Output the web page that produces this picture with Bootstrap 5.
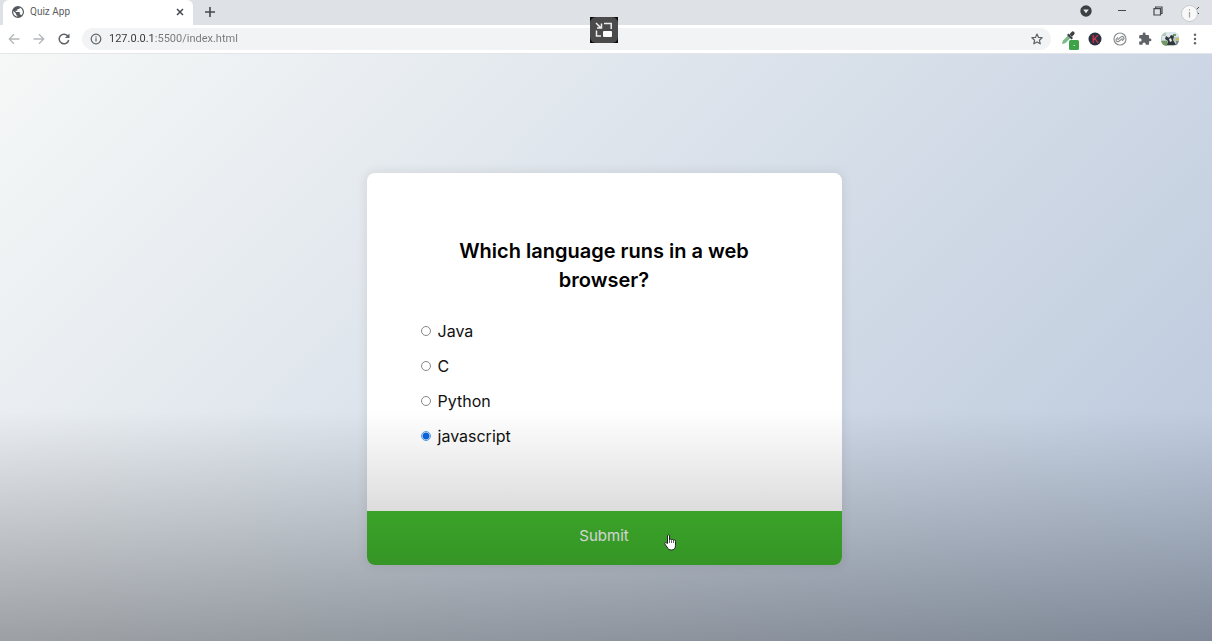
<!DOCTYPE html>
<html lang="en">
<head>
<meta charset="utf-8">
<meta name="viewport" content="width=device-width, initial-scale=1">
<title>Quiz App</title>
<link rel="stylesheet" href="https://cdn.jsdelivr.net/npm/bootstrap@5.3.0/dist/css/bootstrap.min.css">
<style>
  body { font-family: Roboto, "Noto Sans", sans-serif; color: #3c4043; }
  svg { display: block; }
  .plain { border: 0; background: none; padding: 0; color: inherit; display: flex; align-items: center; justify-content: center; }

  /* browser window */
  .title-strip { background: #dee1e6; height: 25px; }
  .page-tab { background: #fff; width: 190px; margin-left: 3px; padding: 0 7px 2px 9px; border-radius: 6px 6px 0 0; font-size: 10px; color: #5a5d61; }
  .tab-name { margin: 0 auto 0 6px; }
  .new-tab { width: 34px; height: 23px; color: #45484c; }
  .win-btn { width: 36px; height: 21px; color: #45484c; }
  .tool-strip { background: #fff; height: 29px; padding: 0 5px 0 1px; border-bottom: 1px solid #e3e5e8; }
  .tool-btn { width: 25px; height: 25px; color: #5f6368; }
  .tool-btn:disabled { color: #b4b7ba; }
  .address { background: #f1f3f4; height: 22px; margin: 0 6px; padding: 0 8px; border-radius: 11px; color: #5f6368; }
  .address input {
    border: 0; outline: 0; padding: 0; min-width: 0; margin: 0 8px 0 7px; font-size: 11px; line-height: 20px;
    color: transparent; background: linear-gradient(90deg, #33363a 46px, #74787c 46px);
    -webkit-background-clip: text; background-clip: text;
  }
  .info-dot { top: 5px; right: 14px; z-index: 3; }
  .pip-btn { top: 17px; left: 590px; width: 28px; height: 26px; background: #0b0b0b; z-index: 3; }
  .pip-btn span { background: #4b4b4b; border-radius: 6px; }

  /* quiz page */
  .quiz-page { background: linear-gradient(135deg, #f6f8f7, #b8c6db); padding: 42px 4px 0 0; }
  .shade { height: 231px; background: linear-gradient(rgba(0,0,0,0), rgba(0,0,0,.31)); pointer-events: none; z-index: 2; }
  .quiz-box { max-width: 475px; border-radius: 8px; background: #fff; box-shadow: 0 0 8px 2px rgba(100,100,100,.12); font-family: Inter, sans-serif; color: #111; }
  .quiz-body { padding: 64px 54px 62px; }
  .quiz-body h2 { font-size: 20px; line-height: 29px; font-weight: 600; color: #000; margin: 0 0 24px; }
  .answers { gap: 10px; }
  .answers label { font-size: 16px; line-height: 25px; }
  .answers input { appearance: none; width: 10px; height: 10px; margin: 0 7px 0 0; border: 1px solid #85878a; border-radius: 50%; background: #fff; }
  .answers input:checked { border-color: #5a9fe6; background: radial-gradient(circle, #0a66e0 0 3px, #fff 4px); }
  .submit-btn { height: 54px; padding-bottom: 2px; font-size: 15px; color: #fff; background: #43bc2f; border-radius: 0 0 8px 8px; }
  .hand { left: 297px; top: 23px; z-index: 3; }
</style>
</head>
<body class="d-flex flex-column min-vh-100 position-relative overflow-hidden">

<header>
  <div class="title-strip d-flex">
    <div class="page-tab d-flex align-items-center">
      <svg width="12" height="12" viewBox="0 0 24 24" aria-hidden="true"><path fill="#55585c" d="M12 0a12 12 0 1 0 0 24 12 12 0 0 0 0-24zM10.800 21.500A9.600 9.600 0 0 1 2.700 9.900L8.400 15.600v1.200a2.400 2.400 0 0 0 2.400 2.400zm8.300-3a2.400 2.400 0 0 0-2.300-1.700h-1.200v-3.600a1.200 1.200 0 0 0-1.200-1.200H7.200V9.600h2.400a1.200 1.200 0 0 0 1.200-1.200V6h2.400a2.400 2.400 0 0 0 2.400-2.400v-.5a9.600 9.600 0 0 1 3.500 15.400z"/></svg>
      <span class="tab-name">Quiz App</span>
      <button type="button" class="plain" aria-label="Close tab"><svg width="12" height="12" viewBox="0 0 12 12" stroke="#45484c" stroke-width="1.500"><path d="M3 3l6 6M9 3l-6 6"/></svg></button>
    </div>
    <button type="button" class="plain new-tab" aria-label="New tab"><svg width="12" height="12" viewBox="0 0 12 12" stroke="currentColor" stroke-width="1.600"><path d="M6 1v10M1 6h10"/></svg></button>
    <div class="d-flex ms-auto">
      <button type="button" class="plain win-btn" aria-label="Search tabs"><svg width="12" height="12" viewBox="0 0 12 12"><circle cx="6" cy="6" r="5.700" fill="#3c4043"/><path fill="#e4e6e9" d="M3.200 4.500h5.600L6 8.200z"/></svg></button>
      <button type="button" class="plain win-btn" aria-label="Minimize"><svg width="10" height="10" viewBox="0 0 10 10" stroke="currentColor"><path d="M1 4.500h8"/></svg></button>
      <button type="button" class="plain win-btn" aria-label="Restore"><svg width="10" height="10" viewBox="0 0 10 10" fill="none" stroke="currentColor" stroke-width="1.200"><path d="M1 2.600h6.500V9H1zM2.600 2.600V1H9v6.500H7.500"/></svg></button>
      <button type="button" class="plain win-btn" aria-label="Close"><svg width="16" height="10" viewBox="0 0 16 10" stroke="currentColor" fill="none"><path d="M6 1l7 7M13 1L6 8"/></svg></button>
    </div>
  </div>

  <div class="tool-strip d-flex align-items-center">
    <button type="button" class="plain tool-btn" aria-label="Back" disabled><svg width="12" height="12" viewBox="0 0 12 12" fill="none" stroke="currentColor" stroke-width="1.300"><path d="M11.500 6H1.500M6 1.300L1.300 6 6 10.700"/></svg></button>
    <button type="button" class="plain tool-btn" aria-label="Forward" disabled><svg width="12" height="12" viewBox="0 0 12 12" fill="none" stroke="currentColor" stroke-width="1.300"><path d="M.5 6h10M6 1.300L10.700 6 6 10.700"/></svg></button>
    <button type="button" class="plain tool-btn" aria-label="Reload"><svg width="12" height="12" viewBox="0 0 12 12" fill="none" stroke="currentColor" stroke-width="1.500"><path d="M10 3.300A4.800 4.800 0 1 0 10.700 7"/><path d="M11.500.5v4.600H6.900z" fill="currentColor" stroke="none"/></svg></button>
    <form class="address d-flex align-items-center flex-grow-1">
      <svg width="12" height="12" viewBox="0 0 12 12" fill="none" stroke="currentColor" stroke-width="1.200" aria-hidden="true"><circle cx="6" cy="6" r="4.800"/><path d="M6 5.300v3.200M6 3.200v1.200"/></svg>
      <input type="text" class="flex-grow-1" aria-label="Address" value="127.0.0.1:5500/index.html">
      <button type="button" class="plain" aria-label="Bookmark"><svg width="12" height="12" viewBox="0 0 12 12" fill="none" stroke="currentColor" stroke-width="1.200" stroke-linejoin="round"><path d="M6 1l1.500 3.400 3.600.3-2.700 2.500.8 3.600L6 8.900l-3.200 1.900.8-3.600L.9 4.700l3.600-.3z"/></svg></button>
    </form>
    <button type="button" class="plain tool-btn" aria-label="Color picker"><svg width="19" height="22" viewBox="0 0 19 22"><path d="M2 15.500l1-3 5-5 2.500 2.500-5 5-3 1z" fill="#7cba8a"/><path d="M7 7l1.500-1.500L13 10l-1.500 1.500z" fill="#3b4144"/><path d="M9.500 6.200l2-2.200a1.800 1.800 0 0 1 2.600 2.600L12 8.800z" fill="#3b4144"/><rect x="9" y="12" width="10" height="10" rx="1.500" fill="#3fa34a"/><path d="M13.500 17.500h1.500" stroke="#bfe5c3"/></svg></button>
    <button type="button" class="plain tool-btn" aria-label="Extension K"><svg width="14" height="14" viewBox="0 0 14 14"><circle cx="7" cy="7" r="6.500" fill="#2a3040"/><text x="7" y="11" text-anchor="middle" font-family="Roboto, sans-serif" font-size="11" fill="#e0344c">K</text></svg></button>
    <button type="button" class="plain tool-btn" aria-label="Link extension"><svg width="14" height="14" viewBox="0 0 14 14" fill="none" stroke="#8b8e91" stroke-width="1.200"><circle cx="7" cy="7" r="6"/><path d="M9 8.800l1.400-1.300a1.700 1.700 0 0 0-2.300-2.600L4.600 7.700M5 5.400L3.700 6.600A1.700 1.700 0 0 0 6 9.200l3.500-2.800"/></svg></button>
    <button type="button" class="plain tool-btn" aria-label="Extensions"><svg width="14" height="14" viewBox="0 0 24 24" fill="currentColor"><path d="M20.500 11H19V7a2 2 0 0 0-2-2h-4V3.500a2.500 2.500 0 0 0-5 0V5H4a2 2 0 0 0-2 2v3.800h1.500a2.700 2.700 0 0 1 0 5.400H2V20a2 2 0 0 0 2 2h3.800v-1.500a2.700 2.700 0 0 1 5.400 0V22H17a2 2 0 0 0 2-2v-4h1.500a2.500 2.500 0 0 0 0-5z"/></svg></button>
    <button type="button" class="plain tool-btn" aria-label="Profile"><svg width="18" height="14" viewBox="0 0 18 14"><clipPath id="face"><rect width="18" height="14" rx="6"/></clipPath><g clip-path="url(#face)"><path fill="#b4c9bb" d="M0 0h18v14H0z"/><path fill="#dde7ee" d="M5 0h13v5H5zM1 4h4v4H1z"/><path fill="#6f9b62" d="M0 9h6v5H0zM12 2h3v2h-3z"/><path fill="#31363d" d="M5 4l3 2 2-3 3 1-1 4 3 5H6l1-4-3-2z"/><path fill="#e9eef3" d="M8 7l2-1 1 3-2 1z"/><path fill="#c9bc66" d="M15 6h3v3h-3z"/><path fill="#6f8ca6" d="M15 9h3v4h-3z"/></g></svg></button>
    <button type="button" class="plain tool-btn" aria-label="Menu"><svg width="12" height="12" viewBox="0 0 12 12" fill="currentColor"><circle cx="6" cy="1.800" r="1.200"/><circle cx="6" cy="6" r="1.200"/><circle cx="6" cy="10.200" r="1.200"/></svg></button>
  </div>
</header>

<button type="button" class="plain pip-btn position-absolute" aria-label="Picture in picture">
  <span class="w-100 h-100 d-flex align-items-center justify-content-center">
    <svg width="18" height="16" viewBox="0 0 18 16" fill="none" stroke="#eee" stroke-width="1.500"><path d="M1 1l5 5M6.500 1.500V6H2M9 1.500h7.200V7M1.500 8.500V14H6"/><rect x="8" y="9" width="9" height="6" rx="1" fill="#fff" stroke="none"/></svg>
  </span>
</button>
<button type="button" class="plain info-dot position-absolute" aria-label="Information"><svg width="17" height="17" viewBox="0 0 17 17"><circle cx="8.500" cy="8.500" r="8" fill="#f8f8f8" stroke="#c0c2c5" stroke-width=".8"/><path d="M8.500 7v5.500M8.500 4.200v1.400" stroke="#a0a2a5" stroke-width="1.200"/></svg></button>

<main class="quiz-page flex-grow-1 d-flex align-items-center justify-content-center">
  <form class="quiz-box w-100">
    <div class="quiz-body">
      <h2 class="text-center" id="question">Which language runs in a web browser?</h2>
      <div class="answers d-flex flex-column" role="radiogroup" aria-labelledby="question">
        <div class="d-flex align-items-center"><input type="radio" name="answer" id="a"><label for="a">Java</label></div>
        <div class="d-flex align-items-center"><input type="radio" name="answer" id="b"><label for="b">C</label></div>
        <div class="d-flex align-items-center"><input type="radio" name="answer" id="c"><label for="c">Python</label></div>
        <div class="d-flex align-items-center"><input type="radio" name="answer" id="d" checked><label for="d">javascript</label></div>
      </div>
    </div>
    <div class="position-relative">
      <button type="button" class="plain submit-btn w-100">Submit</button>
      <svg class="hand position-absolute" width="12" height="17" viewBox="0 0 12 17" aria-hidden="true"><path fill="#fff" stroke="#222" stroke-width="1" stroke-linejoin="round" d="M3.500 9.500V1.800a1 1 0 0 1 2 0V6a1 1 0 0 1 2 .2 1 1 0 0 1 2 .4 1 1 0 0 1 2 .7v4.200c0 3-1.500 4.500-4 4.500-2.300 0-3.500-1-4.500-3L.8 10a1 1 0 0 1 1.500-1.200z"/><path d="M5.500 6v3M7.500 6.500V9M9.500 7v2" stroke="#222" stroke-width=".7"/></svg>
    </div>
  </form>
</main>
<div class="shade position-absolute bottom-0 start-0 w-100"></div>

<script src="https://cdn.jsdelivr.net/npm/bootstrap@5.3.0/dist/js/bootstrap.bundle.min.js"></script>
</body>
</html>
